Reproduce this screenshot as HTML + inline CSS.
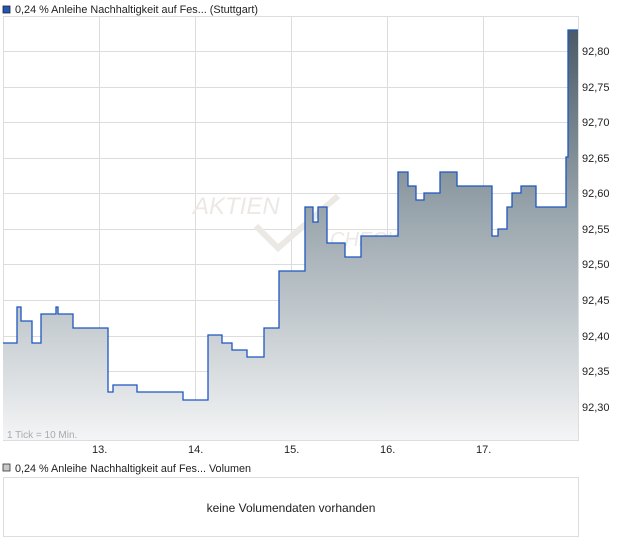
<!DOCTYPE html>
<html><head><meta charset="utf-8"><style>
body{margin:0;background:#fff;font-family:"Liberation Sans",sans-serif;}
</style></head><body>
<svg width="620" height="546" xmlns="http://www.w3.org/2000/svg" style="display:block;font-family:'Liberation Sans',sans-serif">
<defs>
<linearGradient id="g" x1="0" y1="30" x2="0" y2="441" gradientUnits="userSpaceOnUse">
<stop offset="0" stop-color="#4a5b67"/>
<stop offset="0.45" stop-color="#9aa6ad"/>
<stop offset="1" stop-color="#f4f5f6"/>
</linearGradient>
</defs>
<rect x="3" y="6" width="7" height="7" fill="#2356b8" stroke="#222" stroke-width="0.8"/>
<text x="15" y="13" font-size="11" fill="#222" textLength="243" lengthAdjust="spacingAndGlyphs">0,24 % Anleihe Nachhaltigkeit auf Fes... (Stuttgart)</text>
<rect x="3.5" y="16.5" width="575" height="424" fill="#fff" stroke="#ddd"/>
<g stroke="#dcdcdc" stroke-width="1">
<line x1="99.5" y1="17" x2="99.5" y2="440"/><line x1="195.5" y1="17" x2="195.5" y2="440"/><line x1="291.5" y1="17" x2="291.5" y2="440"/><line x1="387.5" y1="17" x2="387.5" y2="440"/><line x1="483.5" y1="17" x2="483.5" y2="440"/>
<line x1="4" y1="51.5" x2="578" y2="51.5"/><line x1="4" y1="87.5" x2="578" y2="87.5"/><line x1="4" y1="122.5" x2="578" y2="122.5"/><line x1="4" y1="158.5" x2="578" y2="158.5"/><line x1="4" y1="193.5" x2="578" y2="193.5"/><line x1="4" y1="229.5" x2="578" y2="229.5"/><line x1="4" y1="264.5" x2="578" y2="264.5"/><line x1="4" y1="300.5" x2="578" y2="300.5"/><line x1="4" y1="336.5" x2="578" y2="336.5"/><line x1="4" y1="371.5" x2="578" y2="371.5"/><line x1="4" y1="407.5" x2="578" y2="407.5"/>
</g>
<text x="193" y="214" font-size="24" font-style="italic" fill="#ece8e4">AKTIEN</text>
<path d="M256 226 L278 248 L338 196" stroke="#ece8e4" stroke-width="6" fill="none"/>
<text x="330" y="246" font-size="20" font-style="italic" fill="#ece8e4">CHECK</text>
<path d="M3,343 H17 V307 H21 V321 H32 V343 H41 V314 H56 V307 H58 V314 H73 V328 H108 V392 H113 V385 H137 V392 H183 V400 H208 V335 H222 V343 H232 V350 H247 V357 H264 V328 H279 V271 H305 V207 H313 V222 H318 V207 H327 V243 H345 V257 H361 V236 H398 V172 H408 V186 H416 V200 H424 V193 H440 V172 H457 V186 H492 V236 H498 V229 H507 V207 H512 V193 H521 V186 H536 V207 H566 V157 H568 V30 H578 V440 H3 Z" fill="url(#g)"/>
<path d="M3,343 H17 V307 H21 V321 H32 V343 H41 V314 H56 V307 H58 V314 H73 V328 H108 V392 H113 V385 H137 V392 H183 V400 H208 V335 H222 V343 H232 V350 H247 V357 H264 V328 H279 V271 H305 V207 H313 V222 H318 V207 H327 V243 H345 V257 H361 V236 H398 V172 H408 V186 H416 V200 H424 V193 H440 V172 H457 V186 H492 V236 H498 V229 H507 V207 H512 V193 H521 V186 H536 V207 H566 V157 H568 V30 H578" fill="none" stroke="#1f56c0" stroke-width="1.3"/>
<g font-size="11" fill="#222">
<text x="582" y="55">92,80</text><text x="582" y="91">92,75</text><text x="582" y="126">92,70</text><text x="582" y="162">92,65</text><text x="582" y="197">92,60</text><text x="582" y="233">92,55</text><text x="582" y="268">92,50</text><text x="582" y="304">92,45</text><text x="582" y="340">92,40</text><text x="582" y="375">92,35</text><text x="582" y="411">92,30</text>
<text x="92" y="453">13.</text><text x="188" y="453">14.</text><text x="284" y="453">15.</text><text x="380" y="453">16.</text><text x="476" y="453">17.</text>
</g>
<text x="7" y="438" font-size="10" fill="#aaa">1 Tick = 10 Min.</text>
<rect x="3" y="464" width="7" height="7" fill="#c8c8c8" stroke="#333" stroke-width="0.8"/>
<text x="15" y="472" font-size="11" fill="#222" textLength="236" lengthAdjust="spacingAndGlyphs">0,24 % Anleihe Nachhaltigkeit auf Fes... Volumen</text>
<rect x="3.5" y="477.5" width="575" height="59" fill="#fff" stroke="#ddd"/>
<text x="291" y="512" font-size="12" fill="#222" text-anchor="middle">keine Volumendaten vorhanden</text>
</svg>
</body></html>
